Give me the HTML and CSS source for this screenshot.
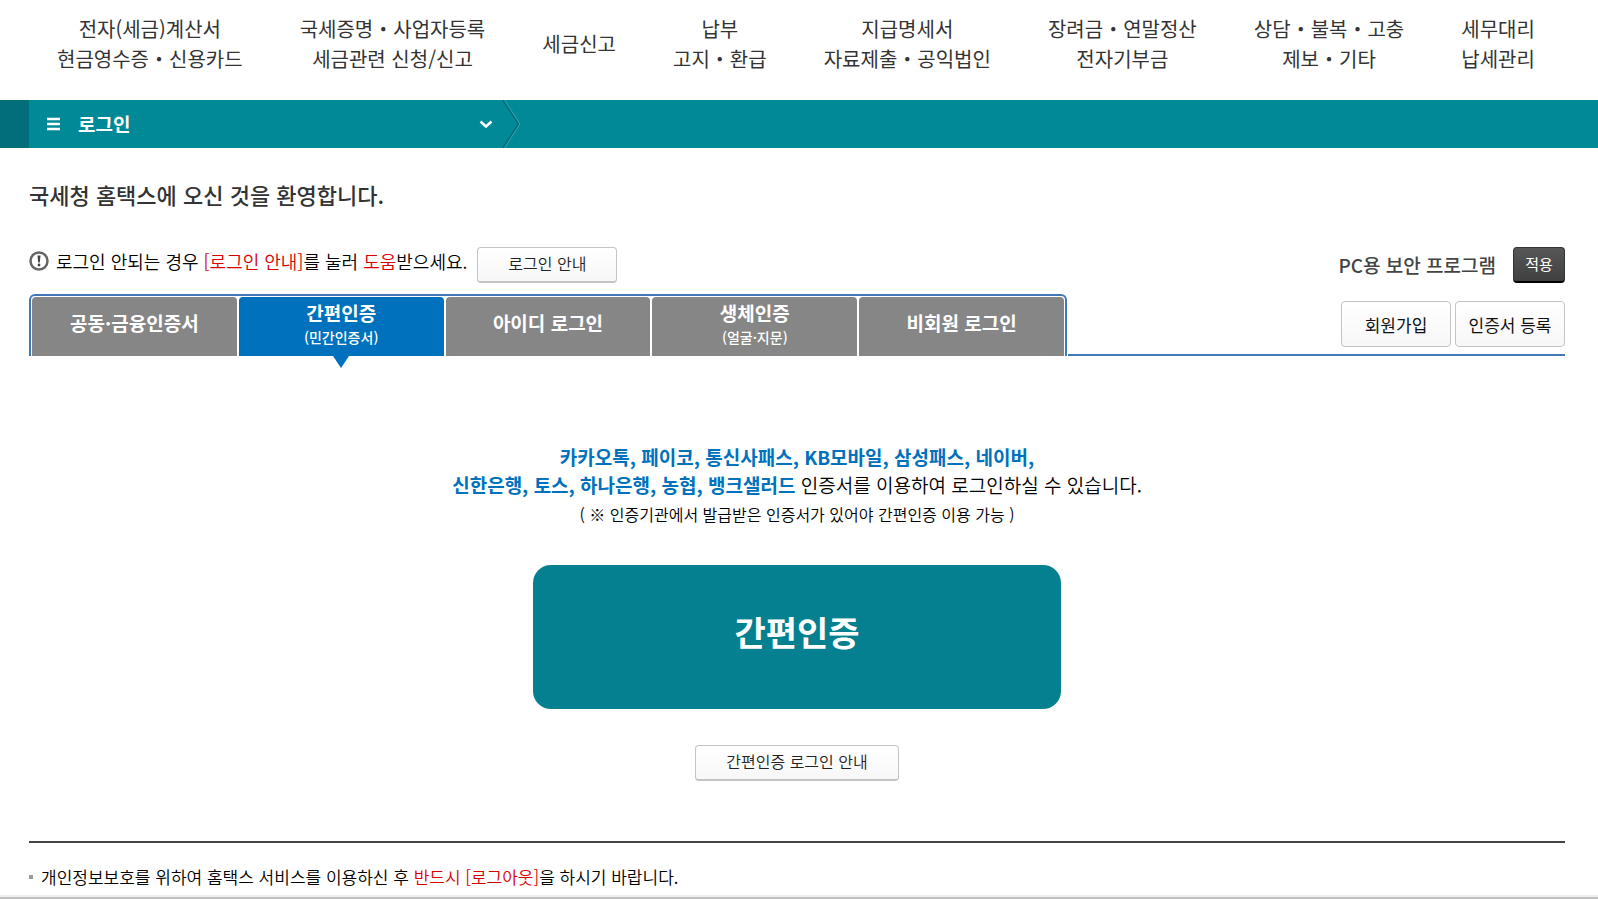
FILE: index.html
```html
<!DOCTYPE html>
<html lang="ko">
<head>
    <meta charset="UTF-8">
    <meta name="viewport" content="width=device-width, initial-scale=1.0">
    <title>국세청 홈택스</title>
    <link rel="stylesheet" href="styles.css">
</head>
<body>
    <nav class="gnb">
        <a href="#">전자(세금)계산서<br>현금영수증・신용카드</a>
        <a href="#">국세증명・사업자등록<br>세금관련 신청/신고</a>
        <a href="#">세금신고</a>
        <a href="#">납부<br>고지・환급</a>
        <a href="#">지급명세서<br>자료제출・공익법인</a>
        <a href="#">장려금・연말정산<br>전자기부금</a>
        <a href="#">상담・불복・고충<br>제보・기타</a>
        <a href="#">세무대리<br>납세관리</a>
    </nav>

    <div class="location">
        <button type="button" class="location-menu">
            <svg class="icon-menu" width="13" height="14" viewBox="0 0 13 14">
                <path d="M0 2h13M0 7h13M0 12h13" stroke="#fff" stroke-width="2.500"/>
            </svg>
            <span>로그인</span>
            <svg class="icon-down" width="14" height="10" viewBox="0 0 14 10">
                <path d="M1.500 2.500L7 7.500l5.500-5" fill="none" stroke="#fff" stroke-width="2.500"/>
            </svg>
        </button>
        <svg class="icon-divider" width="18" height="48" viewBox="0 0 18 48">
            <path d="M0 0l15.500 24L0 48" fill="none" stroke="#016a79" stroke-width="1.500"/>
            <path d="M1.500 0L17 24 1.500 48" fill="none" stroke="#3ba3ae" stroke-width="1"/>
        </svg>
    </div>

    <main class="content">
        <h1>국세청 홈택스에 오신 것을 환영합니다.</h1>

        <div class="notice">
            <p>
                <svg class="icon-notice" width="20" height="20" viewBox="0 0 20 20">
                    <circle cx="10" cy="10" r="8.500" fill="none" stroke="#666" stroke-width="2.500"/>
                    <path d="M8.500 4.500h3L10.800 11.500H9.200z" fill="#444"/>
                    <circle cx="10" cy="14" r="1.400" fill="#444"/>
                </svg>
                <span>로그인 안되는 경우 <em>[로그인 안내]</em>를 눌러 <em>도움</em>받으세요.</span>
            </p>
            <button type="button" class="btn btn-guide">로그인 안내</button>
            <strong class="security">PC용 보안 프로그램</strong>
            <button type="button" class="btn-apply">적용</button>
        </div>

        <div class="tab-row">
            <div class="tabs">
                <button type="button" class="tab">공동·금융인증서</button>
                <button type="button" class="tab active">간편인증<small>(민간인증서)</small></button>
                <button type="button" class="tab">아이디 로그인</button>
                <button type="button" class="tab">생체인증<small>(얼굴·지문)</small></button>
                <button type="button" class="tab">비회원 로그인</button>
            </div>
            <div class="member">
                <button type="button" class="btn btn-member">회원가입</button>
                <button type="button" class="btn btn-member">인증서 등록</button>
            </div>
        </div>

        <section class="login">
            <p class="login-text">
                <b>카카오톡, 페이코, 통신사패스, KB모바일, 삼성패스, 네이버,<br>
                신한은행, 토스, 하나은행, 농협, 뱅크샐러드</b> 인증서를 이용하여 로그인하실 수 있습니다.
            </p>
            <p class="login-sub">( ※ 인증기관에서 발급받은 인증서가 있어야 간편인증 이용 가능 )</p>
            <button type="button" class="btn-login">간편인증</button>
            <button type="button" class="btn btn-login-guide">간편인증 로그인 안내</button>
        </section>

        <ul class="caution">
            <li>개인정보보호를 위하여 홈택스 서비스를 이용하신 후 <em>반드시 [로그아웃]</em>을 하시기 바랍니다.</li>
        </ul>
    </main>

    <div class="bottom-bar"></div>
</body>
</html>
```

FILE: styles.css
```css
* {
    box-sizing: border-box;
}

body {
    margin: 0;
    background-color: #fff;
    color: #000;
    font-family: "Noto Sans CJK KR", sans-serif;
    font-weight: 350;
}

button {
    font-family: inherit;
    padding: 0;
    cursor: pointer;
}

h1,
p,
ul {
    margin: 0;
    padding: 0;
}

em {
    color: #d90000;
    font-style: normal;
}

/* top menu */
.gnb {
    display: flex;
    justify-content: space-between;
    align-items: center;
    height: 100px;
    padding: 0 63px 12px 57px;
}

.gnb a {
    color: #333;
    font-size: 20px;
    font-weight: 400;
    line-height: 30px;
    text-align: center;
    text-decoration: none;
    white-space: nowrap;
}

/* location bar */
.location {
    display: flex;
    height: 48px;
    background-color: #028998;
    border-left: 29px solid #026d7b;
}

.location-menu {
    display: flex;
    align-items: center;
    width: 474px;
    padding: 0 10px 0 18px;
    background: none;
    border: none;
    color: #fff;
    font-size: 19px;
    font-weight: 700;
}

.location-menu span {
    margin-left: 18px;
    padding-bottom: 2px;
}

.icon-down {
    margin-left: auto;
}

.content {
    padding: 0 33px 0 29px;
}

h1 {
    padding-top: 30px;
    color: #333;
    font-size: 22px;
    font-weight: 500;
    line-height: 32px;
}

/* notice */
.notice {
    display: flex;
    align-items: center;
    height: 36px;
    margin-top: 37px;
    font-size: 18px;
    line-height: 28px;
}

.notice p {
    display: flex;
    align-items: center;
    margin-right: 10px;
    padding-bottom: 8px;
}

.icon-notice {
    margin-right: 7px;
}

.btn {
    background: linear-gradient(#fff, #f7f7f7);
    border: 1px solid #c4c4c4;
    border-radius: 4px;
    color: #222;
    font-size: 16px;
    font-weight: 350;
}

.btn-guide,
.btn-login-guide {
    height: 36px;
    padding-bottom: 4px;
    border-bottom: 2px solid #c4c4c4;
}

.btn-guide {
    width: 140px;
}

.security {
    margin-left: auto;
    color: #444;
    font-size: 19px;
    font-weight: 500;
}

.btn-apply {
    width: 52px;
    height: 36px;
    margin-left: 17px;
    padding-bottom: 2px;
    background: linear-gradient(#575757, #404040);
    border: 1px solid #333;
    border-bottom: 2px solid #000;
    border-radius: 4px;
    color: #fff;
    font-size: 15px;
}

/* tabs */
.tab-row {
    display: flex;
    height: 62px;
    margin-top: 11px;
}

.tabs {
    display: flex;
    gap: 2px;
    width: 1038px;
    padding: 1px 1px 0;
    border: 2px solid #4178b8;
    border-bottom: none;
    border-radius: 6px 6px 0 0;
}

.tab {
    position: relative;
    display: flex;
    flex: 1;
    flex-direction: column;
    align-items: center;
    justify-content: center;
    padding-bottom: 8px;
    background-color: #868686;
    border: none;
    border-radius: 4px 4px 0 0;
    color: #fff;
    font-size: 19px;
    font-weight: 700;
    line-height: 28px;
}

.tab small {
    font-size: 14px;
    font-weight: 500;
    line-height: 20px;
}

.tab.active {
    background-color: #0071bd;
}

.tab.active::after {
    content: "";
    position: absolute;
    top: 100%;
    left: 50%;
    margin-left: -8px;
    border: 8px solid transparent;
    border-top: 12px solid #0071bd;
    border-bottom: none;
}

.member {
    display: flex;
    flex: 1;
    gap: 4px;
    justify-content: flex-end;
    margin-left: 1px;
    padding-top: 7px;
    border-bottom: 2px solid #4178b8;
}

.btn-member {
    width: 110px;
    height: 46px;
    color: #111;
    font-size: 17px;
    font-weight: 400;
}

/* login */
.login {
    display: flex;
    flex-direction: column;
    align-items: center;
    padding: 87px 0 60px;
    text-align: center;
}

.login-text {
    font-size: 19px;
    line-height: 28px;
}

.login-text b {
    color: #0071bd;
    font-weight: 700;
}

.login-sub {
    font-size: 16px;
    line-height: 30px;
}

.btn-login {
    width: 528px;
    height: 144px;
    margin: 36px 0;
    padding-bottom: 12px;
    background-color: #048090;
    border: none;
    border-radius: 18px;
    color: #fff;
    font-size: 34px;
    font-weight: 700;
}

.btn-login-guide {
    width: 204px;
}

.caution {
    padding: 22px 0 6px;
    border-top: 2px solid #444;
    font-size: 17px;
    line-height: 24px;
    list-style: none;
}

.caution li {
    display: flex;
    align-items: center;
    white-space: pre;
}

.caution li::before {
    content: "";
    width: 4px;
    height: 4px;
    margin-right: 8px;
    background-color: #999;
}

.bottom-bar {
    height: 5px;
    background-color: #c0c0c0;
    border-top: 2px solid #eee;
}
```
